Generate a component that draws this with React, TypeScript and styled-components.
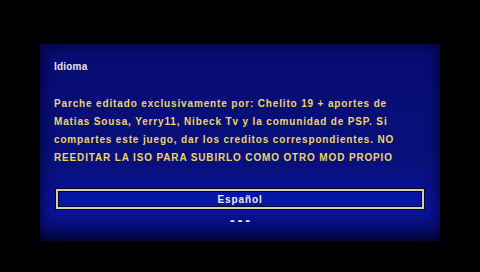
import React from 'react';
import styled, { createGlobalStyle } from 'styled-components';

const GlobalStyle = createGlobalStyle`
	html, body {
		margin: 0;
		padding: 0;
		background: #000;
		width: 480px;
		height: 272px;
		overflow: hidden;
	}
`;

const Screen = styled.div`
	width: 480px;
	height: 272px;
	background: #000;
	display: flex;
	justify-content: center;
	padding-top: 44px;
	box-sizing: border-box;
	font-family: 'Liberation Sans', Arial, sans-serif;
	font-weight: bold;
`;

const Panel = styled.div`
	width: 400px;
	height: 197px;
	box-sizing: border-box;
	padding: 17px 14px 0;
	background: linear-gradient(to bottom, #060c70 0%, #08107c 60%, #0a139a 85%, #060c6a 95%, #030846 100%);
	box-shadow: inset 0 0 12px 2px rgba(0, 0, 36, 0.75);
	display: flex;
	flex-direction: column;
`;

const Title = styled.div`
	color: #e2e2f2;
	font-size: 10px;
	line-height: 12px;
	letter-spacing: 0.2px;
	margin-bottom: 22px;
`;

const Message = styled.div`
	color: #ecd468;
	font-size: 10px;
	line-height: 18px;
	letter-spacing: 0.85px;
	white-space: nowrap;
`;

const Options = styled.div`
	margin-top: 22px;
	display: flex;
	flex-direction: column;
	align-items: center;
`;

const Option = styled.div<{ selected?: boolean }>`
	width: 368px;
	height: 20px;
	box-sizing: border-box;
	display: flex;
	align-items: center;
	justify-content: center;
	color: #e8e8f0;
	font-size: 10px;
	letter-spacing: 0.9px;
	${({ selected }) =>
		selected
			? `
		background: #0816a4;
		border: 2px solid #d6cfa2;
		box-shadow: 0 0 0 1px #020830, inset 0 0 0 1px #020830;
	`
			: `
		height: 22px;
		font-size: 14px;
		letter-spacing: 3px;
		padding-left: 3px;
	`}
`;

const lines = [
	'Parche editado exclusivamente por: Chelito 19 + aportes de',
	'Matias Sousa, Yerry11, Nibeck Tv y la comunidad de PSP. Si',
	'compartes este juego, dar los creditos correspondientes. NO',
	'REEDITAR LA ISO PARA SUBIRLO COMO OTRO MOD PROPIO',
];

const App: React.FC = () => {
	return (
		<>
			<GlobalStyle />
			<Screen>
				<Panel>
					<Title>Idioma</Title>
					{lines.map((line) => (
						<Message key={line}>{line}</Message>
					))}
					<Options>
						<Option selected>Español</Option>
						<Option>---</Option>
					</Options>
				</Panel>
			</Screen>
		</>
	);
};

export default App;
